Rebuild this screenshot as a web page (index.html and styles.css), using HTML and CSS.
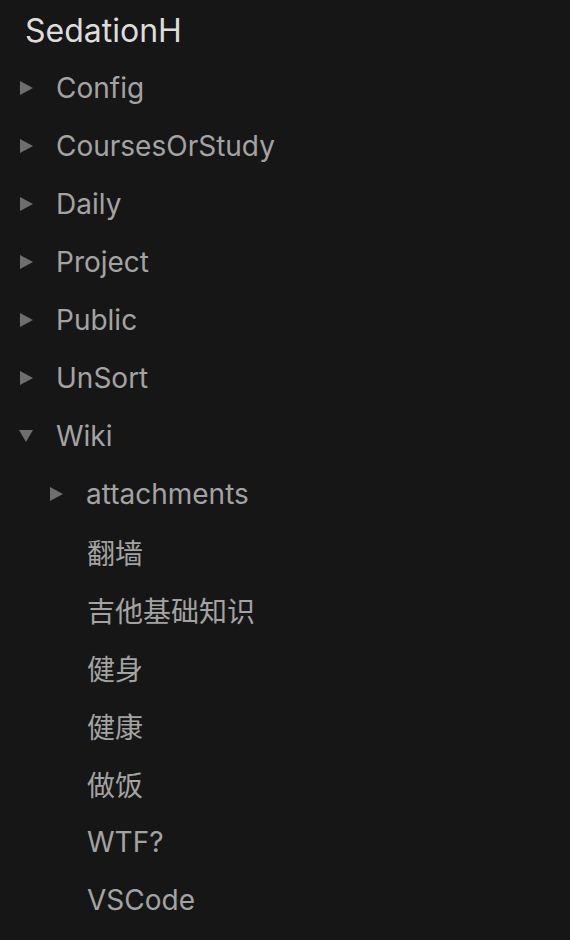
FILE: index.html
```html
<!DOCTYPE html>
<html>
<head>
<meta charset="utf-8">
<link rel="stylesheet" href="styles.css">
</head>
<body>
<div class="tree">
  <div class="title">SedationH</div>
  <div class="row"><span class="arrow right"></span><span class="label">Config</span></div>
  <div class="row"><span class="arrow right"></span><span class="label">CoursesOrStudy</span></div>
  <div class="row"><span class="arrow right"></span><span class="label">Daily</span></div>
  <div class="row"><span class="arrow right"></span><span class="label">Project</span></div>
  <div class="row"><span class="arrow right"></span><span class="label">Public</span></div>
  <div class="row"><span class="arrow right"></span><span class="label">UnSort</span></div>
  <div class="row"><span class="arrow down"></span><span class="label">Wiki</span></div>
  <div class="children">
    <div class="row"><span class="arrow right"></span><span class="label">attachments</span></div>
    <div class="row leaf"><span class="label">翻墙</span></div>
    <div class="row leaf"><span class="label">吉他基础知识</span></div>
    <div class="row leaf"><span class="label">健身</span></div>
    <div class="row leaf"><span class="label">健康</span></div>
    <div class="row leaf"><span class="label">做饭</span></div>
    <div class="row leaf"><span class="label">WTF?</span></div>
    <div class="row leaf"><span class="label">VSCode</span></div>
  </div>
</div>
</body>
</html>
```
FILE: styles.css
```css
html, body {
  margin: 0;
  padding: 0;
  background: #161616;
}
body {
  font-family: Inter, "Noto Sans CJK SC", sans-serif;
}
.tree {
  padding: 1px 0 0 0;
}
.title {
  height: 58px;
  line-height: 60px;
  padding-left: 25px;
  font-size: 32px;
  color: #dcdcdc;
}
.row {
  height: 58px;
  display: flex;
  align-items: center;
  padding-left: 20px;
  font-size: 28px;
  color: #a3a3a3;
}
.arrow.right {
  flex: none;
  width: 0;
  height: 0;
  border-top: 7px solid transparent;
  border-bottom: 7px solid transparent;
  border-left: 13px solid #6e6e6e;
  margin-right: 23px;
}
.arrow.down {
  flex: none;
  width: 0;
  height: 0;
  border-left: 7px solid transparent;
  border-right: 7px solid transparent;
  border-top: 12px solid #6e6e6e;
  margin-left: -1px;
  margin-right: 23px;
}
.children .row {
  padding-left: 50px;
}
.children .row.leaf {
  padding-left: 87px;
}
.label {
  white-space: nowrap;
}
```
